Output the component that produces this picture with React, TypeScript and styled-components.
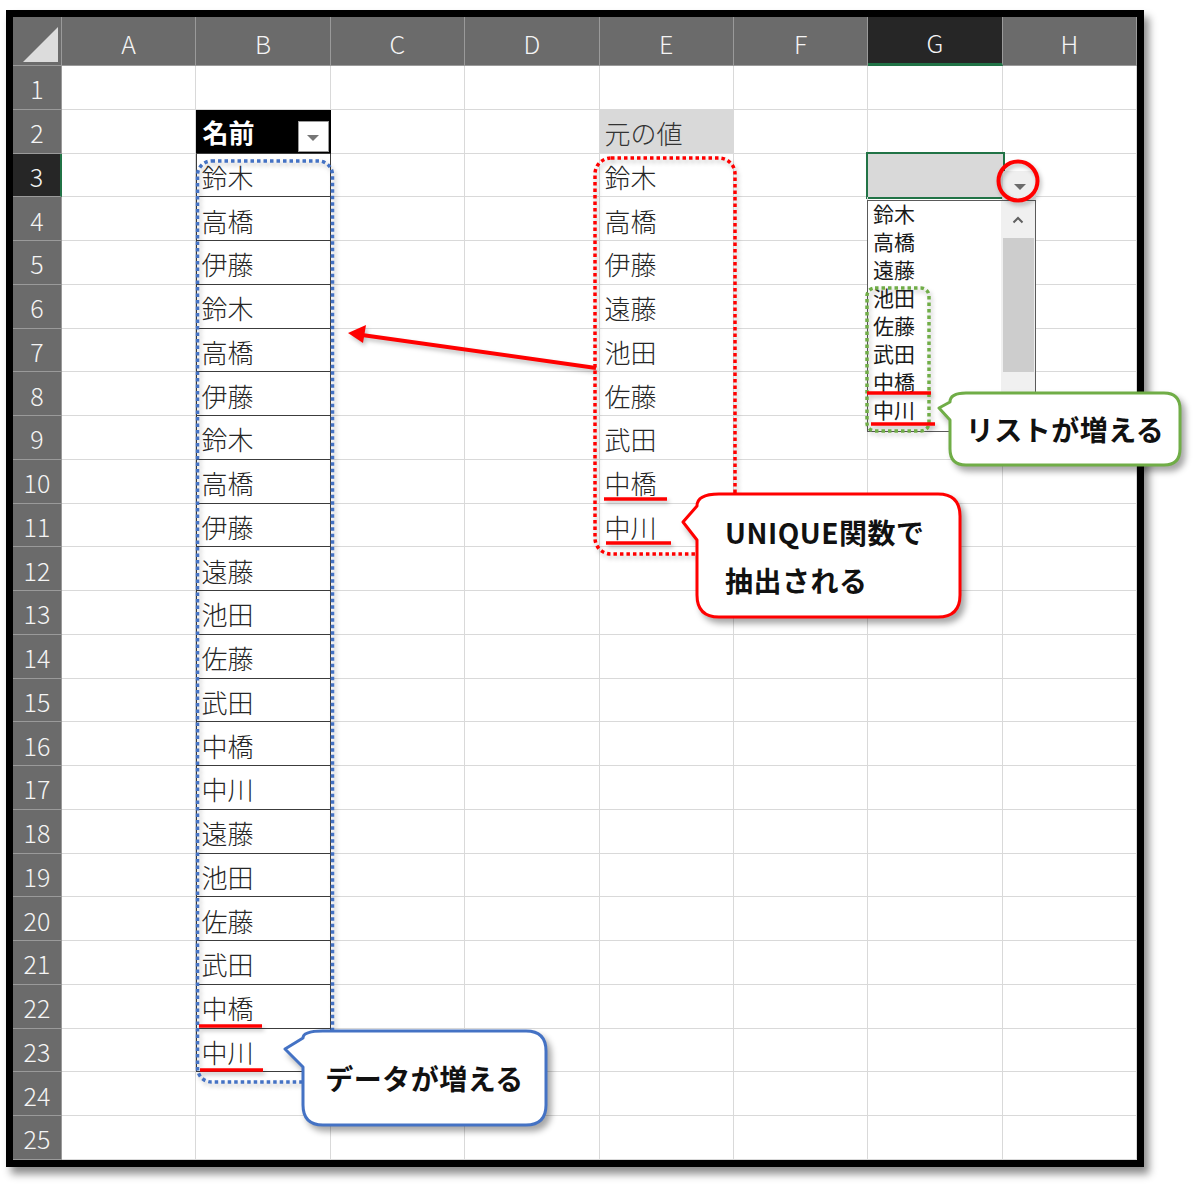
import * as React from "react";
import styled, { createGlobalStyle, css } from "styled-components";

const GlobalStyle = createGlobalStyle`
  html, body {
    margin: 0;
    padding: 0;
    background: #fff;
  }
  body {
    font-family: "Noto Sans CJK JP", "Noto Sans", sans-serif;
  }
`;

const COLS = ["A", "B", "C", "D", "E", "F", "G", "H"];
const ROWS = Array.from({ length: 25 }, (_, i) => i + 1);

const NAMES = [
  "鈴木", "高橋", "伊藤", "鈴木", "高橋", "伊藤", "鈴木", "高橋", "伊藤",
  "遠藤", "池田", "佐藤", "武田", "中橋", "中川",
  "遠藤", "池田", "佐藤", "武田", "中橋", "中川"
];

const SOURCE: Record<number, string> = {
  3: "鈴木", 4: "高橋", 5: "伊藤", 6: "遠藤", 7: "池田",
  8: "佐藤", 9: "武田", 10: "中橋", 11: "中川"
};

const LIST = ["鈴木", "高橋", "遠藤", "池田", "佐藤", "武田", "中橋", "中川"];

type CellKind = "plain" | "table" | "tableHead" | "label" | "selected";

const Page = styled.div`
  position: relative;
  width: 1200px;
  height: 1187px;
  overflow: hidden;
  padding: 10px 0 0 6px;
  box-sizing: border-box;
`;

const Frame = styled.div`
  width: 1124px;
  border: 7px solid #000;
  box-shadow: 5px 7px 8px rgba(0, 0, 0, 0.45);
`;

const Sheet = styled.div`
  display: grid;
  grid-template-columns: 49px repeat(8, 134.375px);
  grid-template-rows: 49px repeat(25, 43.76px);
  background: #fff;
`;

const Corner = styled.div`
  background: #6b6b6b;
  border-right: 1px solid #9a9a9a;
  border-bottom: 1px solid #9a9a9a;
  box-sizing: border-box;
  position: relative;
  &::after {
    content: "";
    position: absolute;
    right: 3px;
    bottom: 3px;
    width: 35px;
    height: 35px;
    background: #dcdcdc;
    clip-path: polygon(100% 0, 100% 100%, 0 100%);
  }
`;

const ColHead = styled.div<{ $active?: boolean }>`
  box-sizing: border-box;
  display: flex;
  align-items: center;
  justify-content: center;
  padding-top: 3px;
  background: ${({ $active }) => ($active ? "#262626" : "#6b6b6b")};
  border-right: 1px solid #9a9a9a;
  border-bottom: ${({ $active }) => ($active ? "3px solid #217346" : "1px solid #9a9a9a")};
  color: #f4f4f4;
  font-size: 25px;
  font-weight: 300;
`;

const RowHead = styled.div<{ $active?: boolean }>`
  box-sizing: border-box;
  display: flex;
  align-items: center;
  justify-content: center;
  padding-top: 2px;
  background: ${({ $active }) => ($active ? "#262626" : "#6b6b6b")};
  border-right: ${({ $active }) => ($active ? "2px solid #217346" : "1px solid #9a9a9a")};
  border-bottom: 1px solid #9a9a9a;
  color: #f4f4f4;
  font-size: 25px;
  font-weight: 300;
`;

const kinds: Record<CellKind, ReturnType<typeof css>> = {
  plain: css``,
  table: css`
    border-right-color: #3c3c3c;
    border-bottom-color: #3c3c3c;
    box-shadow: inset 1px 0 0 #3c3c3c;
  `,
  tableHead: css`
    background: #000;
    color: #fff;
    font-weight: 700;
    border-right-color: #000;
    border-bottom-color: #3c3c3c;
    padding: 0 1px 0 6px;
    align-items: stretch;
  `,
  label: css`
    background: #d9d9d9;
    color: #333;
  `,
  selected: css`
    background: #d9d9d9;
    outline: 2px solid #217346;
  `
};

const Cell = styled.div<{ $kind: CellKind }>`
  box-sizing: border-box;
  display: flex;
  align-items: center;
  padding: 3px 0 0 5px;
  border-right: 1px solid #d9d9d9;
  border-bottom: 1px solid #d9d9d9;
  color: #262626;
  font-size: 26px;
  font-weight: 300;
  white-space: nowrap;
  ${({ $kind }) => kinds[$kind]}
`;

const HeadText = styled.span`
  align-self: center;
  flex: 1;
`;

const FilterButton = styled.div`
  align-self: flex-end;
  width: 31px;
  height: 31px;
  margin-bottom: 1px;
  background: #fff;
  border: 1px solid #9a9a9a;
  box-sizing: border-box;
  display: flex;
  align-items: center;
  justify-content: center;
  &::after {
    content: "";
    border-left: 6px solid transparent;
    border-right: 6px solid transparent;
    border-top: 6px solid #767676;
    margin-top: 3px;
  }
`;

const DropButton = styled.div`
  position: absolute;
  left: 1003px;
  top: 171px;
  width: 33px;
  height: 30px;
  background: #efefef;
  display: flex;
  align-items: center;
  justify-content: center;
  &::after {
    content: "";
    border-left: 6px solid transparent;
    border-right: 6px solid transparent;
    border-top: 6px solid #6b6b6b;
    margin-top: 2px;
  }
`;

const DropList = styled.div`
  position: absolute;
  left: 867px;
  top: 200px;
  width: 169px;
  height: 232px;
  box-sizing: border-box;
  border: 1px solid #5a5a5a;
  background: #fff;
  display: flex;
`;

const ListItems = styled.div`
  flex: 1;
  margin-top: -2px;
  padding-left: 5px;
`;

const ListItem = styled.div`
  height: 28px;
  line-height: 28px;
  font-size: 21px;
  color: #1a1a1a;
  white-space: nowrap;
`;

const ScrollBar = styled.div`
  width: 34px;
  background: #f0f0f0;
  display: flex;
  flex-direction: column;
`;

const ScrollArrow = styled.div`
  height: 37px;
  display: flex;
  align-items: center;
  justify-content: center;
  color: #606060;
`;

const ScrollThumb = styled.div`
  height: 134px;
  margin: 0 1px 0 2px;
  background: #cdcdcd;
`;

const Marks = styled.svg`
  position: absolute;
  left: 0;
  top: 0;
  width: 1200px;
  height: 1187px;
  overflow: visible;
  filter: drop-shadow(2px 3px 2px rgba(0, 0, 0, 0.25));
`;

const BubbleBox = styled.div<{ $left: number; $top: number; $w: number; $h: number }>`
  position: absolute;
  left: ${({ $left }) => $left}px;
  top: ${({ $top }) => $top}px;
  width: ${({ $w }) => $w}px;
  height: ${({ $h }) => $h}px;
`;

const BubbleShape = styled.svg`
  position: absolute;
  left: 0;
  top: 0;
  width: 100%;
  height: 100%;
  overflow: visible;
  filter: drop-shadow(4px 5px 3px rgba(0, 0, 0, 0.35));
`;

const BubbleText = styled.div<{ $align: "center" | "left"; $pad: number }>`
  position: relative;
  height: 100%;
  box-sizing: border-box;
  padding-left: ${({ $pad }) => $pad}px;
  display: flex;
  flex-direction: column;
  justify-content: center;
  align-items: ${({ $align }) => ($align === "center" ? "center" : "flex-start")};
  font-size: 28px;
  font-weight: 700;
  line-height: 48px;
  color: #111;
  white-space: nowrap;
  letter-spacing: 0.5px;
`;

type BubbleProps = {
  left: number;
  top: number;
  w: number;
  h: number;
  r: number;
  y1: number;
  y2: number;
  tx: number;
  ty: number;
  color: string;
  align?: "center" | "left";
  pad?: number;
  children: React.ReactNode;
};

const Bubble: React.FC<BubbleProps> = ({
  left, top, w, h, r, y1, y2, tx, ty, color, align = "center", pad = 0, children
}) => {
  const d = `M ${r},0 H ${w - r} Q ${w},0 ${w},${r} V ${h - r} Q ${w},${h} ${w - r},${h} H ${r} Q 0,${h} 0,${h - r} V ${y2} L ${tx},${ty} L 0,${y1} Q 0,0 ${r},0 Z`;
  return (
    <BubbleBox $left={left} $top={top} $w={w} $h={h}>
      <BubbleShape viewBox={`0 0 ${w} ${h}`}>
        <path d={d} fill="#fff" stroke={color} strokeWidth={3} strokeLinejoin="round" />
      </BubbleShape>
      <BubbleText $align={align} $pad={pad}>{children}</BubbleText>
    </BubbleBox>
  );
};

const cellKind = (col: string, row: number): CellKind => {
  if (col === "B" && row === 2) return "tableHead";
  if (col === "B" && row >= 3 && row <= 23) return "table";
  if (col === "E" && row === 2) return "label";
  if (col === "G" && row === 3) return "selected";
  return "plain";
};

const cellText = (col: string, row: number): string => {
  if (col === "B" && row >= 3 && row <= 23) return NAMES[row - 3];
  if (col === "E" && row === 2) return "元の値";
  if (col === "E") return SOURCE[row] ?? "";
  return "";
};

const underlines: [number, number, number][] = [
  [199, 262, 1026],
  [200, 263, 1070],
  [604, 667, 499],
  [606, 671, 543],
  [867, 931, 393],
  [871, 935, 424]
];

const App: React.FC = () => {
  return (
    <Page>
      <GlobalStyle />
      <Frame>
        <Sheet>
          <Corner />
          {COLS.map((c) => (
            <ColHead key={c} $active={c === "G"}>{c}</ColHead>
          ))}
          {ROWS.map((row) => (
            <React.Fragment key={row}>
              <RowHead $active={row === 3}>{row}</RowHead>
              {COLS.map((col) => {
                const kind = cellKind(col, row);
                return (
                  <Cell key={col} $kind={kind}>
                    {kind === "tableHead" ? (
                      <>
                        <HeadText>名前</HeadText>
                        <FilterButton />
                      </>
                    ) : (
                      cellText(col, row)
                    )}
                  </Cell>
                );
              })}
            </React.Fragment>
          ))}
        </Sheet>
      </Frame>

      <DropButton />
      <DropList>
        <ListItems>
          {LIST.map((name, i) => (
            <ListItem key={i}>{name}</ListItem>
          ))}
        </ListItems>
        <ScrollBar>
          <ScrollArrow>
            <svg width="12" height="8" viewBox="0 0 12 8">
              <path d="M1.5 6.5 L6 2 L10.5 6.5" fill="none" stroke="#606060" strokeWidth="2" />
            </svg>
          </ScrollArrow>
          <ScrollThumb />
        </ScrollBar>
      </DropList>

      <Marks viewBox="0 0 1200 1187">
        <rect x={197.5} y={161} width={135} height={921} rx={14}
          fill="none" stroke="#4472c4" strokeWidth={3.5} strokeDasharray="3.5 3" />
        <rect x={595} y={158} width={140} height={396} rx={16}
          fill="none" stroke="#ff0000" strokeWidth={3.5} strokeDasharray="3.5 3" />
        <rect x={867} y={288} width={62} height={143} rx={8}
          fill="none" stroke="#70ad47" strokeWidth={3.5} strokeDasharray="3.5 3" />
        {underlines.map(([x1, x2, y], i) => (
          <line key={i} x1={x1} x2={x2} y1={y} y2={y} stroke="#ff0000" strokeWidth={3.5} />
        ))}
        <circle cx={1018} cy={181} r={19.5} fill="none" stroke="#ff0000" strokeWidth={4} />
        <line x1={596} y1={368} x2={362} y2={335} stroke="#ff0000" strokeWidth={4} />
        <polygon points="348,333 366,325 363,343" fill="#ff0000" />
      </Marks>

      <Bubble left={697} top={494} w={263} h={123} r={22} y1={12} y2={46} tx={-14} ty={28}
        color="#ff0000" align="left" pad={28}>
        <span>UNIQUE関数で</span>
        <span>抽出される</span>
      </Bubble>
      <Bubble left={950} top={393} w={230} h={72} r={16} y1={9} y2={27} tx={-11} ty={15}
        color="#70ad47">
        <span>リストが増える</span>
      </Bubble>
      <Bubble left={303} top={1031} w={243} h={94} r={20} y1={7} y2={36} tx={-18} ty={18}
        color="#4472c4">
        <span>データが増える</span>
      </Bubble>
    </Page>
  );
};

export default App;
